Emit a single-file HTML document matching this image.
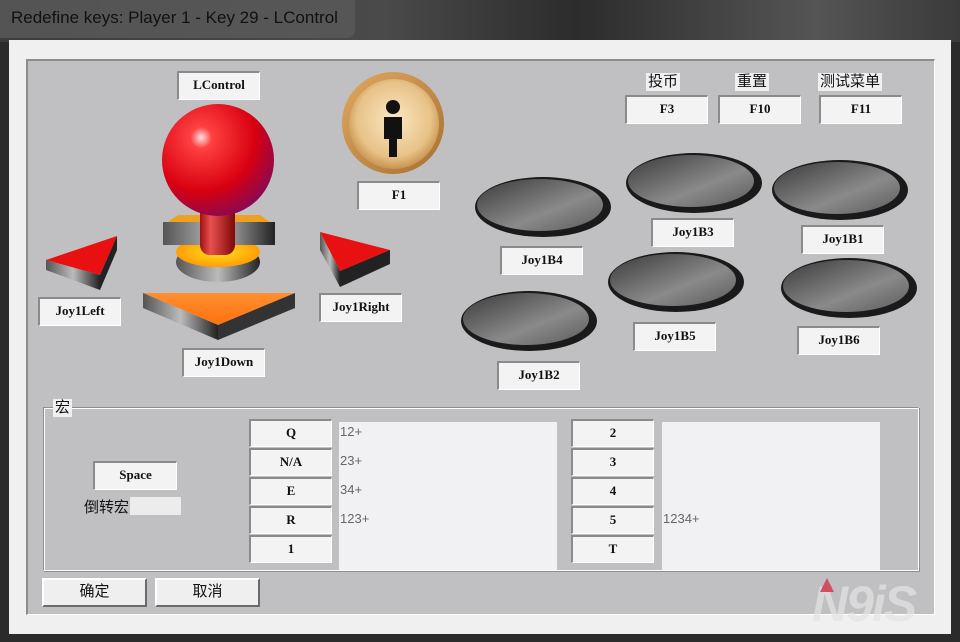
<!DOCTYPE html>
<html><head><meta charset="utf-8"><style>
*{margin:0;padding:0;box-sizing:border-box}
body{width:960px;height:642px;overflow:hidden;background:#2b2b2b;position:relative;font-family:"Liberation Mono","Noto Sans CJK SC",monospace}
.a{position:absolute}
.lb{position:absolute;background:#f3f3f3;border-top:2px solid #8a8a8a;border-left:2px solid #8a8a8a;border-right:1px solid #fff;border-bottom:1px solid #fff;font-size:13px;font-weight:bold;color:#111;text-align:center;line-height:24px;font-family:"Liberation Serif","Noto Serif CJK SC",serif}
.cn{position:absolute;font-family:"Liberation Sans","Noto Sans CJK SC",sans-serif;font-size:15px;color:#111;background:#f0f0f0;line-height:18px;padding:0 2px}
.btn{position:absolute;background:#efefef;border-top:2px solid #fff;border-left:2px solid #fff;border-right:2px solid #6a6a6a;border-bottom:2px solid #6a6a6a;font-family:"Liberation Sans","Noto Sans CJK SC",sans-serif;font-size:15px;text-align:center;line-height:24px;color:#111}
.tx{position:absolute;background:#f1f1f3}
.tx span{position:absolute;left:1px;font-family:"Liberation Sans",sans-serif;font-size:13px;color:#666}
</style></head><body>
<div class="a" style="left:0;top:0;width:960px;height:42px;background:linear-gradient(90deg,#3c3c3c 0%,#4a4a4a 40%,#2c2c2c 60%,#555 85%,#3a3a3a 100%)"></div>
<div class="a" style="left:0;top:0;width:355px;height:38px;background:#5a5a5a;border-radius:0 0 8px 0;opacity:.8"></div>
<div class="a" style="left:11px;top:8px;font-family:'Liberation Sans',sans-serif;font-size:17px;color:#111">Redefine keys: Player 1 - Key 29 - LControl</div>
<div class="a" style="left:9px;top:40px;width:942px;height:594px;background:#f0f0f0"></div>
<div class="a" style="left:26px;top:59px;width:909px;height:556px;background:#c0c0c2;border-top:2px solid #8d8d8d;border-left:2px solid #8d8d8d;border-right:1px solid #fff;border-bottom:1px solid #fff"></div>

<svg class="a" style="left:30px;top:95px" width="380" height="260" viewBox="30 95 380 260">
<defs>
<radialGradient id="ball" cx="0.35" cy="0.3" r="0.8"><stop offset="0" stop-color="#ffe0e0"/><stop offset="0.12" stop-color="#ff4040"/><stop offset="0.6" stop-color="#d80010"/><stop offset="1" stop-color="#7a0a60"/></radialGradient>
<linearGradient id="sh" x1="0" x2="1"><stop offset="0" stop-color="#a01010"/><stop offset="0.3" stop-color="#e85050"/><stop offset="1" stop-color="#800808"/></linearGradient>
<linearGradient id="met" x1="0" x2="1"><stop offset="0" stop-color="#555"/><stop offset="0.5" stop-color="#bbb"/><stop offset="1" stop-color="#222"/></linearGradient>
<radialGradient id="org" cx="0.5" cy="0.5" r="0.6"><stop offset="0" stop-color="#ffe020"/><stop offset="1" stop-color="#ff9000"/></radialGradient>
<linearGradient id="dn" x1="0" y1="0" x2="0" y2="1"><stop offset="0" stop-color="#ff9030"/><stop offset="1" stop-color="#ff7010"/></linearGradient>
</defs>
<ellipse cx="218" cy="262" rx="42" ry="20" fill="url(#met)"/>
<ellipse cx="218" cy="252" rx="42" ry="15" fill="url(#org)"/>
<rect x="163" y="222" width="112" height="23" fill="url(#met)"/>
<polygon points="168,222 270,222 260,215 178,215" fill="#f0a020"/>
<rect x="200" y="190" width="35" height="65" rx="10" fill="url(#sh)"/>
<circle cx="218" cy="160" r="56" fill="url(#ball)"/>
<polygon points="143,293 295,293 218,325" fill="url(#dn)"/>
<polygon points="143,293 143,308 218,340 218,325" fill="url(#met)"/>
<polygon points="295,293 295,308 218,340 218,325" fill="#333"/>
<polygon points="46,260 117,236 100,275" fill="#e81010"/>
<polygon points="46,260 46,270 100,290 100,275" fill="url(#met)"/>
<polygon points="117,236 117,250 100,290 100,275" fill="#222"/>
<polygon points="320,232 390,250 340,271" fill="#e81010"/>
<polygon points="390,250 390,264 340,287 340,271" fill="#222"/>
<polygon points="320,232 320,250 340,287 340,271" fill="url(#met)"/>
</svg>

<svg class="a" style="left:340px;top:70px" width="108" height="108">
<defs><radialGradient id="gold" cx="0.5" cy="0.45" r="0.55"><stop offset="0" stop-color="#fbe7c2"/><stop offset="0.75" stop-color="#e8c288"/><stop offset="1" stop-color="#c79450"/></radialGradient>
<linearGradient id="rim" x1="0" y1="0" x2="1" y2="1"><stop offset="0" stop-color="#e0a860"/><stop offset="1" stop-color="#a87030"/></linearGradient></defs>
<circle cx="53" cy="53" r="51" fill="url(#rim)"/>
<circle cx="54" cy="54" r="45" fill="url(#gold)"/>
<circle cx="53" cy="37" r="7" fill="#111"/>
<path d="M44 47h18v22h-5v18h-8v-18h-5z" fill="#111"/>
</svg>

<svg class="a" style="left:0;top:0" width="960" height="642">
<defs><linearGradient id="ov" x1="0" y1="0" x2="1" y2="1"><stop offset="0" stop-color="#3a3a3a"/><stop offset="0.6" stop-color="#8a8a8a"/><stop offset="1" stop-color="#5a5a5a"/></linearGradient></defs>
<g>
<ellipse cx="543" cy="207" rx="68" ry="30" fill="#1a1a1a"/><ellipse cx="540" cy="205" rx="63" ry="26" fill="url(#ov)"/>
<ellipse cx="694" cy="183" rx="68" ry="30" fill="#1a1a1a"/><ellipse cx="691" cy="181" rx="63" ry="26" fill="url(#ov)"/>
<ellipse cx="840" cy="190" rx="68" ry="30" fill="#1a1a1a"/><ellipse cx="837" cy="188" rx="63" ry="26" fill="url(#ov)"/>
<ellipse cx="676" cy="282" rx="68" ry="30" fill="#1a1a1a"/><ellipse cx="673" cy="280" rx="63" ry="26" fill="url(#ov)"/>
<ellipse cx="849" cy="288" rx="68" ry="30" fill="#1a1a1a"/><ellipse cx="846" cy="286" rx="63" ry="26" fill="url(#ov)"/>
<ellipse cx="529" cy="321" rx="68" ry="30" fill="#1a1a1a"/><ellipse cx="526" cy="319" rx="63" ry="26" fill="url(#ov)"/>
</g>
</svg>

<div class="lb" style="left:177px;top:71px;width:83px;height:29px">LControl</div>
<div class="lb" style="left:357px;top:181px;width:83px;height:29px">F1</div>
<div class="cn" style="left:646px;top:73px">投币</div>
<div class="cn" style="left:735px;top:73px">重置</div>
<div class="cn" style="left:818px;top:73px">测试菜单</div>
<div class="lb" style="left:625px;top:95px;width:83px;height:29px">F3</div>
<div class="lb" style="left:718px;top:95px;width:83px;height:29px">F10</div>
<div class="lb" style="left:819px;top:95px;width:83px;height:29px">F11</div>
<div class="lb" style="left:500px;top:246px;width:83px;height:29px">Joy1B4</div>
<div class="lb" style="left:651px;top:218px;width:83px;height:29px">Joy1B3</div>
<div class="lb" style="left:801px;top:225px;width:83px;height:29px">Joy1B1</div>
<div class="lb" style="left:633px;top:322px;width:83px;height:29px">Joy1B5</div>
<div class="lb" style="left:797px;top:326px;width:83px;height:29px">Joy1B6</div>
<div class="lb" style="left:497px;top:361px;width:83px;height:29px">Joy1B2</div>
<div class="lb" style="left:38px;top:297px;width:83px;height:29px">Joy1Left</div>
<div class="lb" style="left:319px;top:293px;width:83px;height:29px">Joy1Right</div>
<div class="lb" style="left:182px;top:348px;width:83px;height:29px">Joy1Down</div>

<div class="a" style="left:43px;top:407px;width:876px;height:164px;border-top:1px solid #8d8d8d;border-left:1px solid #8d8d8d;border-right:1px solid #fff;border-bottom:1px solid #fff;box-shadow:inset 1px 1px 0 #fff,1px 1px 0 #8d8d8d"></div>
<div class="cn" style="left:53px;top:399px;padding:0 2px">宏</div>
<div class="lb" style="left:93px;top:461px;width:84px;height:29px">Space</div>
<div class="a" style="left:130px;top:497px;width:51px;height:18px;background:#ececec"></div>
<div class="a" style="left:84px;top:496px;font-family:'Liberation Sans','Noto Sans CJK SC',sans-serif;font-size:15px;color:#111">倒转宏</div>

<div class="lb" style="left:249px;top:419px;width:83px;height:28px">Q</div>
<div class="lb" style="left:249px;top:448px;width:83px;height:28px">N/A</div>
<div class="lb" style="left:249px;top:477px;width:83px;height:28px">E</div>
<div class="lb" style="left:249px;top:506px;width:83px;height:28px">R</div>
<div class="lb" style="left:249px;top:535px;width:83px;height:28px">1</div>
<div class="tx" style="left:339px;top:422px;width:218px;height:148px"><span style="top:2px">12+</span><span style="top:31px">23+</span><span style="top:60px">34+</span><span style="top:89px">123+</span></div>
<div class="lb" style="left:571px;top:419px;width:83px;height:28px">2</div>
<div class="lb" style="left:571px;top:448px;width:83px;height:28px">3</div>
<div class="lb" style="left:571px;top:477px;width:83px;height:28px">4</div>
<div class="lb" style="left:571px;top:506px;width:83px;height:28px">5</div>
<div class="lb" style="left:571px;top:535px;width:83px;height:28px">T</div>
<div class="tx" style="left:662px;top:422px;width:218px;height:148px"><span style="top:89px">1234+</span></div>

<div class="btn" style="left:42px;top:578px;width:105px;height:29px">确定</div>
<div class="btn" style="left:155px;top:578px;width:105px;height:29px">取消</div>

<div class="a" style="left:812px;top:575px;font-family:'Liberation Sans',sans-serif;font-style:italic;font-weight:bold;font-size:50px;color:#e4e4e4;opacity:.7;letter-spacing:-2px">N9iS</div>
<div class="a" style="left:820px;top:578px;width:0;height:0;border-left:7px solid transparent;border-right:7px solid transparent;border-bottom:14px solid #d05060"></div>
</body></html>
